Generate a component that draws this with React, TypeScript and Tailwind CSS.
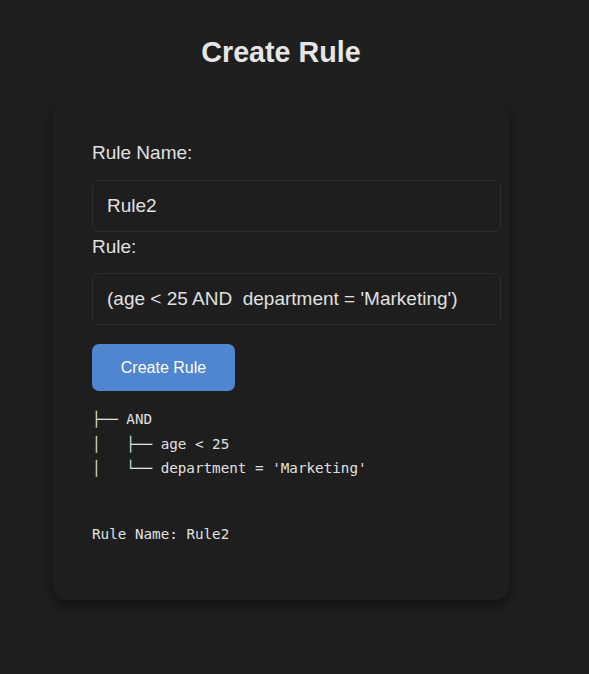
import { useState } from 'react';

const treeLines = ['├── AND', '│   ├── age < 25', '│   └── department = \'Marketing\''];

export default function App() {
  const [name, setName] = useState('Rule2');
  const [rule, setRule] = useState("(age < 25 AND  department = 'Marketing')");

  return (
    <div className="min-h-screen bg-[#1f1f1f] text-[#e0e0e0] font-['Liberation_Sans',Arial,sans-serif]">
      <div className="w-[562px] flex flex-col items-center pt-[36px]">
        <h1 className="text-[28.7px] leading-[32px] font-bold text-[#e6e6e6]">Create Rule</h1>

        <div className="mt-[32px] w-[456px] h-[500px] bg-[#1e1e1e] rounded-[14px] shadow-[0_6px_16px_rgba(0,0,0,0.45)] px-[39px] pt-[42px]">
          <label className="block text-[19px] leading-[21px]">Rule Name:</label>
          <input
            value={name}
            onChange={(e) => setName(e.target.value)}
            className="mt-[17px] box-border w-[409px] h-[52px] px-[14px] bg-[#1e1e1e] border border-[#2c2c2c] rounded-[7px] text-[19px] text-[#e0e0e0] outline-none"
          />

          <label className="block mt-[4px] text-[19px] leading-[21px]">Rule:</label>
          <input
            value={rule}
            onChange={(e) => setRule(e.target.value)}
            className="mt-[16px] box-border w-[409px] h-[52px] px-[14px] bg-[#1e1e1e] border border-[#2c2c2c] rounded-[7px] text-[19px] text-[#e0e0e0] outline-none"
          />

          <button className="block mt-[19px] w-[143px] h-[47px] bg-[#5085d0] rounded-[7px] text-white text-[16px]">
            Create Rule
          </button>

          <pre className="mt-[16px] font-['DejaVu_Sans_Mono',monospace] text-[14.25px] leading-[24.5px] text-[#e0e0e0]">
            {treeLines.join('\n')}
          </pre>

          <pre className="mt-[41px] font-['DejaVu_Sans_Mono',monospace] text-[14.25px] leading-[24.5px] text-[#e0e0e0]">
            Rule Name: {name}
          </pre>
        </div>
      </div>
    </div>
  );
}
